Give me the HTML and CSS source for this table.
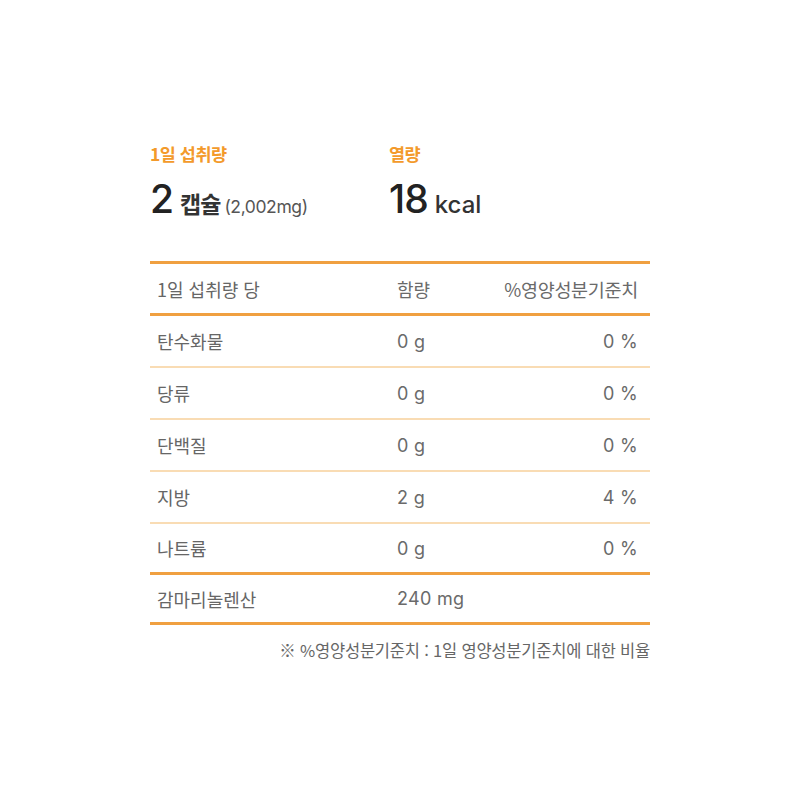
FILE: index.html
```html
<!DOCTYPE html>
<html lang="ko">
<head>
<meta charset="utf-8">
<link rel="stylesheet" href="styles.css">
</head>
<body>
<div class="wrap">
  <div class="summary">
    <div class="sum-col">
      <div class="label">1일 섭취량</div>
      <div class="big"><span class="num">2</span><span class="unit-kr">캡슐</span><span class="sub">(2,002mg)</span></div>
    </div>
    <div class="sum-col">
      <div class="label">열량</div>
      <div class="big"><span class="num">18</span><span class="unit">kcal</span></div>
    </div>
  </div>
  <div class="table">
    <div class="row head"><span class="c1">1일 섭취량 당</span><span class="c2">함량</span><span class="c3">%영양성분기준치</span></div>
    <div class="row"><span class="c1">탄수화물</span><span class="c2">0 g</span><span class="c3">0 %</span></div>
    <div class="row"><span class="c1">당류</span><span class="c2">0 g</span><span class="c3">0 %</span></div>
    <div class="row"><span class="c1">단백질</span><span class="c2">0 g</span><span class="c3">0 %</span></div>
    <div class="row"><span class="c1">지방</span><span class="c2">2 g</span><span class="c3">4 %</span></div>
    <div class="row pre"><span class="c1">나트륨</span><span class="c2">0 g</span><span class="c3">0 %</span></div>
    <div class="row last"><span class="c1">감마리놀렌산</span><span class="c2">240 mg</span><span class="c3"></span></div>
  </div>
  <div class="note">※ %영양성분기준치 : 1일 영양성분기준치에 대한 비율</div>
</div>
</body>
</html>
```
FILE: styles.css
```css
body {
  margin: 0;
  background: #fff;
  font-family: "Noto Sans CJK KR", "Noto Sans", sans-serif;
}
.wrap {
  width: 500px;
  margin: 0 auto;
  padding-top: 139px;
}
.summary {
  display: flex;
  height: 122px;
}
.sum-col { width: 239px; }
.label {
  color: #f39a2b;
  font-size: 17.5px;
  font-weight: 700;
  line-height: 30px;
  letter-spacing: -0.5px;
}
.big {
  margin-top: 8px;
  color: #222;
  line-height: 44px;
  display: flex;
  align-items: baseline;
}
.num {
  font-family: "Inter", sans-serif;
  font-size: 39px;
  font-weight: 500;
  letter-spacing: -1px;
  margin-right: 7px;
}
.unit-kr {
  font-size: 23px;
  font-weight: 700;
  color: #333;
  margin-right: 4px;
  letter-spacing: -1px;
}
.unit {
  font-family: "Inter", sans-serif;
  font-size: 24px;
  font-weight: 500;
  color: #333;
}
.sub {
  font-family: "Inter", sans-serif;
  font-size: 17.5px;
  color: #555;
  letter-spacing: -0.4px;
}
.table {
  border-top: 3px solid #f0a040;
  border-bottom: 3px solid #f0a040;
}
.row {
  display: flex;
  align-items: center;
  height: 50px;
  border-bottom: 2px solid #f9dcb4;
  color: #666;
  font-size: 18px;
  padding: 0 12px 0 7px;
}
.row.head { border-bottom: 3px solid #f0a040; height: 49px; }
.row.pre { border-bottom: 3px solid #f0a040; height: 48px; }
.row.last { border-bottom: none; height: 47px; }
.c1 { width: 240px; }
.c2 { flex: 1; font-family: "Inter", sans-serif; font-size: 18px; letter-spacing: 0.3px; color: #6a6a6a; }
.head .c2 { font-family: inherit; letter-spacing: 0; }
.c3 { text-align: right; font-family: "Inter", sans-serif; font-size: 18px; letter-spacing: 0.3px; color: #6a6a6a; }
.head .c3 { font-family: inherit; font-size: 18.5px; letter-spacing: -0.3px; }
.note {
  text-align: right;
  color: #666;
  font-size: 16.5px;
  margin-top: 13px;
  letter-spacing: -0.2px;
}
```
